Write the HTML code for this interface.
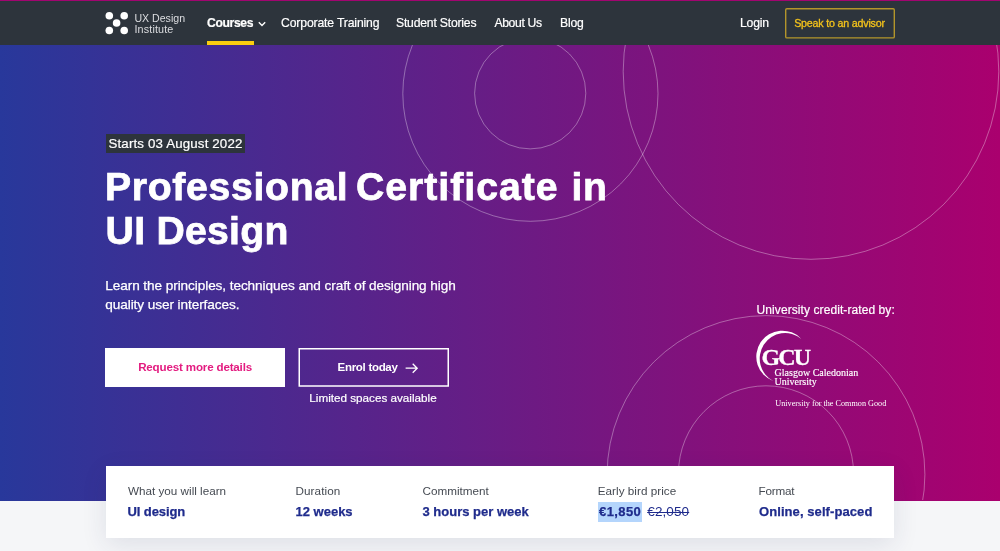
<!DOCTYPE html>
<html lang="en">
<head>
<meta charset="utf-8">
<title>Professional Certificate in UI Design</title>
<style>
*{box-sizing:border-box;margin:0;padding:0}
html,body{-webkit-font-smoothing:antialiased;width:1000px;height:551px;overflow:hidden;background:#f5f6f8;font-family:"Liberation Sans",Arial,sans-serif;}
body{position:relative}
.topline{position:absolute;left:0;top:0;width:1000px;height:1.2px;background:#a20570}
.nav{position:absolute;left:0;top:1px;width:1000px;height:44px;background:#2d343c}
.nav span,.nav a{position:absolute;white-space:nowrap;color:#fff;text-decoration:none}
.nl{font-size:12.2px;top:15px;line-height:14px;letter-spacing:-0.2px;-webkit-text-stroke:0.2px #fff}
.hero{position:absolute;left:0;top:45px;width:1000px;height:455.8px;background:linear-gradient(90deg,#28389b 0%,#aa006e 100%);overflow:hidden}
.hero svg{position:absolute;left:0;top:0}
.abs{position:absolute;white-space:nowrap}
.badge{-webkit-text-stroke:0.2px #fff;left:105.5px;top:134.3px;width:139.6px;height:19.2px;background:#2d343c;color:#fff;font-size:13.3px;line-height:19.8px;padding-left:3px;letter-spacing:0.15px}
h1{position:absolute;left:105px;top:165.4px;color:#fff;font-weight:bold;font-size:39.2px;line-height:43.2px;-webkit-text-stroke:0.75px #fff;white-space:nowrap;letter-spacing:0px}
.lead{-webkit-text-stroke:0.25px #fff;left:105.3px;top:275.5px;color:#fff;font-size:13.6px;line-height:19.6px;letter-spacing:-0.08px}
.btn1{left:105.2px;top:348px;width:179.8px;height:38.8px;background:#fff;color:#e31c80;font-weight:bold;font-size:11.6px;line-height:37px;text-align:center;letter-spacing:-0.17px}
.btn2{left:298px;top:348px;width:150.5px;height:38.8px;color:#fff;font-weight:bold;font-size:11.5px;line-height:39px;letter-spacing:-0.3px}
.lim{-webkit-text-stroke:0.2px #fff;left:309.3px;top:390.2px;color:#fff;font-size:11.7px;line-height:15px}
.card{position:absolute;left:105.5px;top:465.8px;width:788.5px;height:72.1px;background:#fff;box-shadow:0 7px 26px rgba(40,50,90,.11)}
.lab{position:absolute;top:17.6px;font-size:11.7px;line-height:15px;color:#454a52;white-space:nowrap}
.val{-webkit-text-stroke:0.25px #1f2b8c;position:absolute;top:37.2px;font-size:13px;letter-spacing:-0.1px;line-height:17px;color:#1f2b8c;font-weight:bold;white-space:nowrap}
</style>
</head>
<body>
<div id="wrap" style="position:absolute;left:0;top:0;width:1000px;height:551px;will-change:transform">
<div class="hero">
<svg width="1000" height="455" viewBox="0 45 1000 455" fill="none" stroke="#fff" stroke-opacity="0.34" stroke-width="1">
<circle cx="530.2" cy="93.3" r="55.6"/>
<circle cx="530.4" cy="93.7" r="127.6"/>
<circle cx="811" cy="71.5" r="187.8"/>
<circle cx="766" cy="474.5" r="158.9"/>
<circle cx="766" cy="473.3" r="87.5"/>
</svg>
</div>
<div class="nav">
<svg style="position:absolute;left:104px;top:10px" width="26" height="26" viewBox="104 11 26 26" fill="#fff"><circle cx="109.3" cy="15.7" r="3.8"/><circle cx="124.2" cy="15.7" r="3.8"/><circle cx="116.6" cy="23.0" r="3.8"/><circle cx="109.3" cy="30.5" r="3.8"/><circle cx="124.2" cy="30.5" r="3.8"/></svg>
<span id="lg1" style="left:134.4px;top:11.6px;font-size:10.6px;line-height:11px;color:#dcdde0">UX Design</span>
<span id="lg2" style="left:134.5px;top:22.8px;font-size:10.8px;line-height:11px;letter-spacing:0.12px;color:#dcdde0">Institute</span>
<span id="n1" class="nl" style="left:207px;font-weight:bold;font-size:12.2px;letter-spacing:-0.38px">Courses</span>
<svg style="position:absolute;left:257px;top:18.5px" width="10" height="8" viewBox="0 0 10 8" fill="none" stroke="#fff" stroke-width="1.4"><path d="M1.8 2.2 L5 5.4 L8.2 2.2"/></svg>
<div style="position:absolute;left:207px;top:40px;width:46.5px;height:4px;background:#fbce0e"></div>
<span id="n2" class="nl" style="left:281.1px;letter-spacing:-0.15px">Corporate Training</span>
<span id="n3" class="nl" style="left:396px">Student Stories</span>
<span id="n4" class="nl" style="left:494.4px;letter-spacing:-0.35px">About Us</span>
<span id="n5" class="nl" style="left:560px">Blog</span>
<span id="n6" class="nl" style="left:740px">Login</span>
<svg style="position:absolute;left:784px;top:6px" width="112" height="33" viewBox="784 7 112 33" fill="none" stroke="#b3952b" stroke-width="1.4"><rect x="785.7" y="8.7" width="108.6" height="29.2" rx="1.2"/></svg>
<span id="n7t" style="left:794.2px;top:15.4px;font-size:10.7px;line-height:14px;letter-spacing:-0.2px;color:#f3c21b;-webkit-text-stroke:0.3px #f3c21b">Speak to an advisor</span>
</div>
<div class="topline"></div>

<div id="badge" class="abs badge"><span id="bt">Starts 03 August 2022</span></div>
<h1><span id="h1a" style="letter-spacing:0.68px">Professional <span style="margin-left:-3.9px;letter-spacing:0.98px">Certificate</span> <span style="margin-left:1.4px">in</span></span><br><span id="h1b" style="letter-spacing:0.25px;position:relative;left:0.6px">UI Design</span></h1>
<div class="abs lead"><span id="p1">Learn the principles, techniques and craft of designing high</span><br><span id="p2">quality user interfaces.</span></div>
<div class="abs btn1"><span id="b1">Request more details</span></div>
<div class="abs btn2"><svg style="position:absolute;left:0;top:0" width="152" height="39" viewBox="0 0 152 39" fill="none" stroke="#fff" stroke-width="1.5"><rect x="1.25" y="0.75" width="149" height="37.25"/></svg><span id="b2" style="position:absolute;left:39.6px">Enrol today</span>
<svg style="position:absolute;left:106.8px;top:14.4px" width="14" height="12" viewBox="0 0 14 12" fill="none" stroke="#fff" stroke-width="1.3"><path d="M0.6 6.2 H12.2 M7.7 1.7 L12.2 6.2 L7.7 10.7"/></svg></div>
<div class="abs lim"><span id="lim">Limited spaces available</span></div>

<div class="abs" style="left:756.6px;top:302.5px;color:#fff;font-size:12px;line-height:15px;letter-spacing:0.08px;-webkit-text-stroke:0.2px #fff"><span id="ucr">University credit-rated by:</span></div>

<svg class="abs" style="left:750px;top:325.6px" width="150" height="90" viewBox="750 325 150 90">
<path fill="#fff" d="M801.4 337.9 A26.06 26.06 0 1 0 773.5 380.2 A25.48 25.48 0 1 1 801.4 337.9 Z"/>
<text id="gcu" x="761.5" y="363.6" fill="#fff" font-family="'Liberation Serif',serif" font-weight="bold" font-size="24" letter-spacing="-1.9" stroke="#fff" stroke-width="0.3">GCU</text>
<text id="gc1" x="774.6" y="375.1" fill="#fff" stroke="#fff" stroke-width="0.15" font-family="'Liberation Serif',serif" font-size="10">Glasgow Caledonian</text>
<text id="gc2" x="774.6" y="384.2" fill="#fff" stroke="#fff" stroke-width="0.15" font-family="'Liberation Serif',serif" font-size="10">University</text>
<text id="gc3" x="775.3" y="405" fill="#fff" font-family="'Liberation Serif',serif" font-size="8.2">University for the Common Good</text>
</svg>
<div class="card">
<span class="lab" id="l1" style="left:22.5px">What you will learn</span>
<span class="val" id="v1" style="left:22px">UI design</span>
<span class="lab" id="l2" style="left:190px;letter-spacing:0.08px">Duration</span>
<span class="val" id="v2" style="left:190px;letter-spacing:0px">12 weeks</span>
<span class="lab" id="l3" style="left:317px">Commitment</span>
<span class="val" id="v3" style="left:317px;letter-spacing:0px">3 hours per week</span>
<span class="lab" id="l4" style="left:492.2px;letter-spacing:0.04px">Early bird price</span>
<span style="position:absolute;left:492.5px;top:36.3px;width:43.5px;height:19.6px;background:#b4d5fc"></span>
<span class="val" id="v4" style="left:493.5px;letter-spacing:0.4px">€1,850</span>
<span class="val" id="v4b" style="-webkit-text-stroke:0;left:541.8px;font-weight:normal;letter-spacing:0.1px;font-size:13.5px;text-decoration:line-through;text-decoration-thickness:1px">€2,050</span>
<span class="lab" id="l5" style="left:653px;letter-spacing:-0.2px">Format</span>
<span class="val" id="v5" style="left:653.5px;letter-spacing:0.08px">Online, self-paced</span>
</div>
</div>
</body>
</html>
